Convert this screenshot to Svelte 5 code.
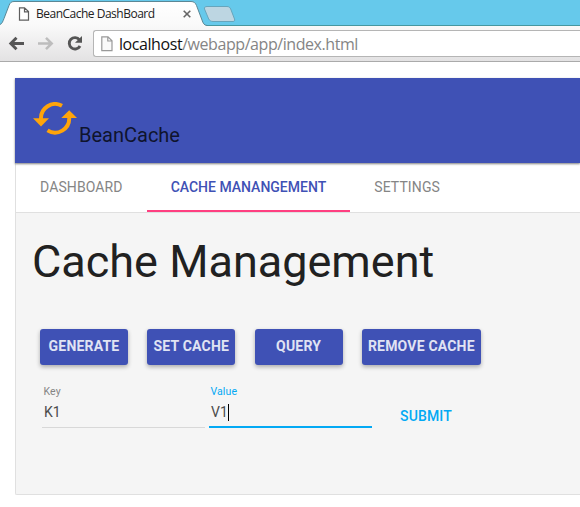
<script>
  const tabs = ['DASHBOARD', 'CACHE MANANGEMENT', 'SETTINGS'];
  const actions = ['GENERATE', 'SET CACHE', 'QUERY', 'REMOVE CACHE'];
  let active = $state(1);
</script>

<div class="window">
  <div class="strip">
    <svg class="shapes" width="580" height="26" viewBox="0 0 580 26">
      <defs>
        <linearGradient id="tabfill" x1="0" y1="0" x2="0" y2="1">
          <stop offset="0" stop-color="#ffffff" />
          <stop offset="1" stop-color="#f9f9f9" />
        </linearGradient>
      </defs>
      <path d="M0 25.5H580" stroke="#4597a0" />
      <path d="M-4 26L0 24.500C2 24 3 21 4 18.500L9 5.500C10 3 11 1.500 14 1.500H191C194 1.500 195.500 3 196.500 5.500L202 20C203 23 204 25.300 207 25.500V27H-4Z" fill="url(#tabfill)" stroke="#5b8795" />
      <path d="M0 26H204L203 25H0Z" fill="#f9f9f9" />
      <path d="M207 6.500H227C229 6.500 230 7.500 230.700 9L234.500 19C235 20.500 234.500 21.500 233 21.500H213C211 21.500 209.500 20.500 208.700 19L204.500 9C204 7.500 205 6.500 207 6.500Z" fill="#bdd6e2" stroke="#67a5bc" />
    </svg>
    <svg class="tabpage" width="12" height="14" viewBox="0 0 12 14">
      <path d="M1.500 .8H6.500L10.500 4.500V13.200H1.500Z M6.500 1V4.800H10" fill="#fff" stroke="#5e5e5e" stroke-width="1.200" />
    </svg>
    <span class="tabtitle">BeanCache DashBoard</span>
    <svg class="close" width="8" height="8" viewBox="0 0 8 8"><path d="M.7 .7L7.300 7.300M7.300 .7L.7 7.300" stroke="#666" stroke-width="1.600" /></svg>
  </div>
  <div class="toolbar">
    <svg class="nav" width="93" height="35" viewBox="0 26 93 35">
      <path d="M24 43.500H12M16.500 37.800L10.800 43.500L16.500 49.200" fill="none" stroke="#555" stroke-width="2.900" />
      <path d="M38 43.500H50M46 37.800L51.700 43.500L46 49.200" fill="none" stroke="#bdbdbd" stroke-width="2.500" />
      <path d="M79.500 39.800A5.700 5.700 0 1 0 80 46" fill="none" stroke="#555" stroke-width="2.900" />
      <path d="M82 36V42.800H75Z" fill="#555" />
    </svg>
    <div class="omnibox">
      <svg width="12" height="16" viewBox="0 0 12 16"><path d="M.8 .8H7L11 4.800V14.700H.8Z M6.800 1V5H11" fill="#fafafa" stroke="#999" stroke-width="1.200" /></svg>
      <span class="url"><b>localhost</b>/webapp/app/index.html</span>
    </div>
  </div>

  <main>
    <header>
      <svg width="44" height="33" viewBox="0 0 44 33">
        <path d="M29 3.800A14.200 14.200 0 0 0 8 17" fill="none" stroke="#ffa40a" stroke-width="3.900" />
        <path d="M0 16.300H16L8 24.500Z" fill="#ffa40a" />
        <path d="M14.500 28.400A14.200 14.200 0 0 0 36.200 15.500" fill="none" stroke="#ffa40a" stroke-width="3.900" />
        <path d="M28.300 16H44L36.200 8.200Z" fill="#ffa40a" />
      </svg>
      <span>BeanCache</span>
    </header>
    <section>
      <nav class="tabs">
        {#each tabs as tab, i}
          <button class="tab" class:active={active === i} onclick={() => (active = i)}>{tab}</button>
        {/each}
      </nav>
      <div class="content">
        <h1>Cache Management</h1>
        <div class="actions">
          {#each actions as action}
            <button>{action}</button>
          {/each}
        </div>
        <div class="form">
          <div class="field">
            <span class="label">Key</span>
            <span class="value">K1</span>
          </div>
          <div class="field focused">
            <span class="label">Value</span>
            <span class="value">V1<i></i></span>
          </div>
          <button class="submit">SUBMIT</button>
        </div>
      </div>
    </section>
  </main>
</div>

<style>
  :global(body) { margin: 0; background: #fff; overflow: hidden; }
  * { box-sizing: border-box; }
  button { border: 0; padding: 0; background: none; font-family: Roboto, sans-serif; }
  .window { width: 580px; height: 507px; overflow: hidden; font-family: Roboto, sans-serif; }
  .strip { height: 26px; background: #66c9eb; position: relative; display: flex; align-items: center; padding: 1px 0 0 18px; }
  .strip svg { flex: none; }
  .strip .shapes { position: absolute; left: 0; top: 0; }
  .tabpage, .tabtitle, .close { position: relative; }
  .tabtitle { width: 147px; margin-left: 6px; font: 12px/16px "Open Sans", sans-serif; letter-spacing: -.5px; color: #222; white-space: nowrap; }
  .toolbar { height: 36px; display: flex; background: linear-gradient(#f9f9f9, #e3e2e3); border-bottom: 1px solid #aaa; }
  .nav { flex: none; }
  .omnibox { flex: 1; height: 27px; margin-top: 4px; border: 1px solid #b5b5b5; border-right: 0; border-radius: 3px 0 0 3px; background: #fff; display: flex; align-items: center; padding-left: 7px; }
  .url { margin-left: 6px; font: 16px/22px "Open Sans", sans-serif; letter-spacing: -.43px; color: #858585; white-space: nowrap; }
  .url b { font-weight: 400; color: #111; }
  main { padding: 16px 0 0 15px; }
  header { position: relative; height: 85px; background: #3f51b5; box-shadow: 0 1px 2px rgba(0,0,0,.5); display: flex; align-items: flex-start; padding: 24px 0 0 18px; }
  header span { margin: 21px 0 0 2px; font-size: 20px; line-height: 24px; color: #0f142d; }
  section { height: 332px; border: 1px solid #e0e0e0; border-right: 0; border-top: 0; border-radius: 0 0 0 2px; background: #f5f5f5; }
  .tabs { height: 50px; background: #fff; border-bottom: 1px solid #e0e0e0; display: flex; }
  .tab { height: 49px; padding: 0 24px; font-size: 14px; line-height: 20px; letter-spacing: .11px; color: #858585; border-bottom: 2px solid transparent; white-space: nowrap; }
  .tab.active { color: #3f51b5; border-color: #ff4081; font-weight: 500; letter-spacing: 0; }
  h1 { margin: 0; padding: 22px 0 0 16px; font-size: 45px; line-height: 54px; font-weight: 400; color: #212121; white-space: nowrap; }
  .actions { display: flex; gap: 19.300px; padding: 40px 0 0 24px; }
  .actions button { min-width: 88px; height: 36px; padding: 0 6px 2px; border-radius: 3px; background: #3f51b5; color: #e0e3f3; font-size: 14px; line-height: 34px; letter-spacing: .2px; font-weight: 700; white-space: nowrap; box-shadow: 0 2px 4px rgba(0,0,0,.3); }
  .form { display: flex; padding: 19px 0 0 26px; gap: 4px; }
  .field { width: 163px; height: 44px; border-bottom: 1px solid #d8d8d8; display: flex; flex-direction: column; padding-left: 2px; }
  .label { margin-left: -.5px; font-size: 10.500px; line-height: 16px; letter-spacing: .1px; color: #858585; }
  .value { display: flex; align-items: center; height: 24px; font-size: 14px; color: #4c4c4c; }
  .value i { width: 1px; height: 17px; background: #000; }
  .focused { border-bottom: 2px solid #03a9f4; }
  .focused .label { color: #03a9f4; }
  .submit { width: 88px; height: 36px; margin: 14px 0 0 6px; color: #03a9f4; font-size: 14px; font-weight: 500; letter-spacing: .15px; }
</style>
